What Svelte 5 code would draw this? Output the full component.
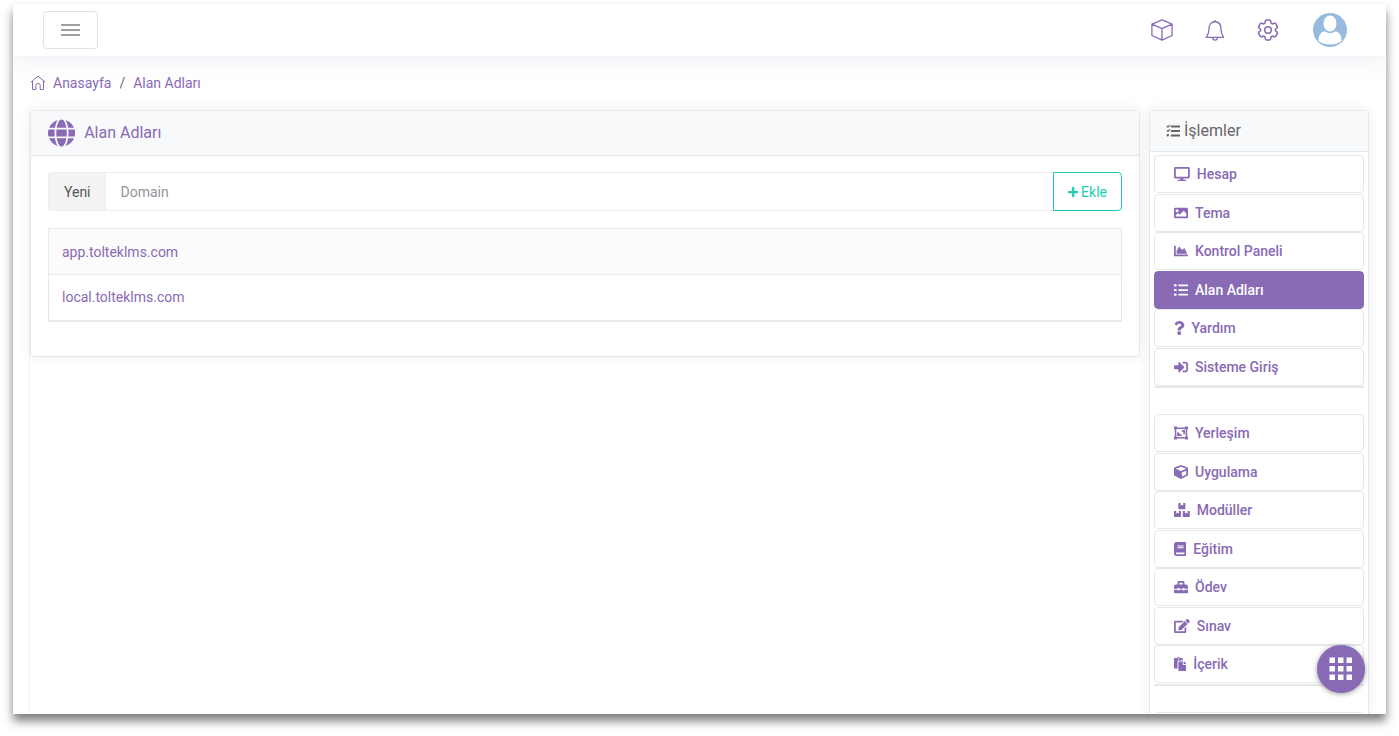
<script lang="ts">
  type Icon = { w: number; d: string };
  type Item = { label: string; icon: string; active?: boolean };

  const icons: Record<string, Icon> = {
    desktop: {
      w: 576,
      d: "M528 0H48C21.5 0 0 21.5 0 48v320c0 26.500 21.500 48 48 48h192l-16 48h-72c-13.300 0-24 10.700-24 24s10.700 24 24 24h272c13.300 0 24-10.700 24-24s-10.700-24-24-24h-72l-16-48h192c26.500 0 48-21.500 48-48V48c0-26.500-21.500-48-48-48zm-16 352H64V64h448v288z",
    },
    image: {
      w: 512,
      d: "M464 448H48c-26.500 0-48-21.500-48-48V112c0-26.500 21.500-48 48-48h416c26.500 0 48 21.500 48 48v288c0 26.500-21.500 48-48 48zM112 120a56 56 0 1 0 0 112a56 56 0 1 0 0-112zM64 384h384V272l-87.500-87.500c-4.700-4.700-12.300-4.700-17 0L208 320l-55.500-55.500c-4.700-4.700-12.300-4.700-17 0L64 336v48z",
    },
    chart: {
      w: 512,
      d: "M500 384c6.600 0 12 5.400 12 12v40c0 6.600-5.400 12-12 12H12c-6.600 0-12-5.400-12-12V76c0-6.600 5.400-12 12-12h40c6.600 0 12 5.400 12 12v308h436zM372.700 159.500L288 216l-85.300-113.700c-5.100-6.800-15.500-6.300-19.900 1L96 248v104h384l-89.900-187.800c-3.200-6.500-11.400-8.700-17.400-4.700z",
    },
    list: {
      w: 512,
      d: "M16 48h64c9 0 16 7 16 16v48c0 9-7 16-16 16H16c-9 0-16-7-16-16V64c0-9 7-16 16-16zM16 216h64c9 0 16 7 16 16v48c0 9-7 16-16 16H16c-9 0-16-7-16-16v-48c0-9 7-16 16-16zM16 384h64c9 0 16 7 16 16v48c0 9-7 16-16 16H16c-9 0-16-7-16-16v-48c0-9 7-16 16-16zM176 56h320c9 0 16 7 16 16v32c0 9-7 16-16 16H176c-9 0-16-7-16-16V72c0-9 7-16 16-16zM176 224h320c9 0 16 7 16 16v32c0 9-7 16-16 16H176c-9 0-16-7-16-16v-32c0-9 7-16 16-16zM176 392h320c9 0 16 7 16 16v32c0 9-7 16-16 16H176c-9 0-16-7-16-16v-32c0-9 7-16 16-16z",
    },
    question: {
      w: 384,
      d: "M202 0C122.200 0 70.500 32.700 29.900 91c-7.400 10.600-5.100 25.100 5.200 32.900l43.100 32.700c10.400 7.900 25.200 6 33.300-4.100 25-31.400 43.600-49.500 82.700-49.500 30.800 0 68.800 19.800 68.800 49.600 0 22.600-18.600 34.200-49 51.200-35.400 19.900-82.300 44.600-82.300 106.400V320c0 13.300 10.700 24 24 24h72.500c13.300 0 24-10.700 24-24v-5.800c0-42.900 125.300-44.600 125.300-160.600C377.500 66.300 286.900 0 202 0zM192 373.500a69.300 69.300 0 1 0 0 138.500a69.300 69.300 0 1 0 0-138.500z",
    },
    signin: {
      w: 512,
      d: "M416 448h-84c-6.600 0-12-5.400-12-12v-40c0-6.600 5.400-12 12-12h84c17.700 0 32-14.300 32-32V160c0-17.700-14.300-32-32-32h-84c-6.600 0-12-5.400-12-12V76c0-6.600 5.400-12 12-12h84c53 0 96 43 96 96v192c0 53-43 96-96 96zm-47-201L201 79c-15-15-41-4.500-41 17v96H24c-13.300 0-24 10.700-24 24v96c0 13.300 10.700 24 24 24h136v96c0 21.500 26 32 41 17l168-168c9.300-9.400 9.300-24.600 0-34z",
    },
    layout: {
      w: 512,
      d: "M0 20h112v32h288V20h112v100h-28v272h28v100H400v-32H112v32H0V392h28V120H0zM112 120H84v272h28v12h288v-12h28V120h-28v-12H112zM290 150h110v150H340V210H290zM112 240h90v60h80v62H112z",
    },
    cube: {
      w: 512,
      d: "M239.100 6.300l-208 78c-18.700 7-31.100 25-31.100 45v225.100c0 18.200 10.300 34.800 26.500 42.900l208 104c13.500 6.800 29.400 6.800 42.900 0l208-104c16.300-8.100 26.500-24.800 26.500-42.900V129.300c0-20-12.400-37.900-31.100-44.900l-208-78C262 2.200 250 2.200 239.100 6.300zM256 68.400l192 72v1.100l-192 78-192-78v-1.100l192-72zm32 356V275.500l160-65v133.900l-160 80z",
    },
    boxes: {
      w: 576,
      d: "M176 0h64v96l48-28 48 28V0h64q16 0 16 16v192q0 16-16 16H176q-16 0-16-16V16q0-16 16-16zM16 288h64v96l48-28 48 28v-96h64q16 0 16 16v192q0 16-16 16H16q-16 0-16-16V304q0-16 16-16zM336 288h64v96l48-28 48 28v-96h64q16 0 16 16v192q0 16-16 16H336q-16 0-16-16V304q0-16 16-16z",
    },
    book: {
      w: 448,
      d: "M448 360V24c0-13.300-10.700-24-24-24H96C43 0 0 43 0 96v320c0 53 43 96 96 96h328c13.300 0 24-10.700 24-24v-16c0-7.500-3.500-14.300-8.900-18.700-4.200-15.400-4.200-59.300 0-74.700 5.400-4.300 8.900-11.100 8.900-18.600zM128 128v32h224v-32zM128 192v32h224v-32zM381.400 448H96c-17.700 0-32-14.300-32-32 0-17.600 14.400-32 32-32h285.400c-1.900 17.100-1.900 46.900 0 64z",
    },
    toolbox: {
      w: 512,
      d: "M502 214l-45-45c-6-6-14-9-22-9h-51V80c0-26-22-48-48-48H176c-26 0-48 22-48 48v80H77c-8 0-16 3-22 9l-45 45c-6 6-10 14-10 23v83h128v-16q0-16 16-16h32q16 0 16 16v16h128v-16q0-16 16-16h32q16 0 16 16v16h128v-83c0-9-4-17-10-23zM320 160H192V96h128zM384 368q0 16-16 16h-32q-16 0-16-16v-16H192v16q0 16-16 16h-32q-16 0-16-16v-16H0v96q0 32 32 32h448q32 0 32-32v-96H384z",
    },
    edit: {
      w: 576,
      d: "M402.600 83.200l90.200 90.200c3.800 3.800 3.800 10 0 13.800L274.400 405.600l-92.800 10.300c-12.400 1.400-22.900-9.100-21.500-21.500l10.300-92.800L388.800 83.200c3.800-3.800 10-3.800 13.800 0zm162-22.900l-48.800-48.800c-15.200-15.200-39.900-15.200-55.200 0l-35.400 35.400c-3.800 3.800-3.800 10 0 13.800l90.200 90.200c3.800 3.800 10 3.800 13.800 0l35.400-35.400c15.200-15.300 15.200-40 0-55.200zM384 346.200V448H64V128h229.800c3.200 0 6.200-1.300 8.500-3.500l40-40c7.600-7.600 2.200-20.500-8.500-20.500H48C21.500 64 0 85.500 0 112v352c0 26.500 21.500 48 48 48h352c26.500 0 48-21.500 48-48V306.200c0-10.700-12.900-16-20.500-8.500l-40 40c-2.200 2.300-3.500 5.300-3.500 8.500z",
    },
    paste: {
      w: 448,
      d: "M128 184c0-30.900 25.100-56 56-56h136V56c0-13.300-10.700-24-24-24h-80.600C204.300 12.900 183.600 0 160 0s-44.300 12.900-55.400 32H24C10.700 32 0 42.700 0 56v336c0 13.300 10.700 24 24 24h104V184zM160 40a24 24 0 1 1 0 48a24 24 0 1 1 0-48zM344 288h104v200c0 13.300-10.700 24-24 24H184c-13.300 0-24-10.700-24-24V184c0-13.300 10.700-24 24-24h136v104c0 13.200 10.800 24 24 24zM448 250v6h-96v-96h6c6 0 12 3 17 7l66 66c4 5 7 11 7 17z",
    },
    tasks: {
      w: 512,
      d: "M10 84l30-28 30 26 54-58 32 28-84 92zM10 244l30-28 30 26 54-58 32 28-84 92zM66 370a44 44 0 1 0 0 88a44 44 0 1 0 0-88zM192 52h304q16 0 16 16v40q0 16-16 16H192q-16 0-16-16V68q0-16 16-16zM192 220h304q16 0 16 16v40q0 16-16 16H192q-16 0-16-16v-40q0-16 16-16zM192 388h304q16 0 16 16v40q0 16-16 16H192q-16 0-16-16v-40q0-16 16-16z",
    },
    plus: {
      w: 448,
      d: "M416 208H272V64c0-17.700-14.300-32-32-32h-32c-17.700 0-32 14.300-32 32v144H32c-17.700 0-32 14.300-32 32v32c0 17.700 14.300 32 32 32h144v144c0 17.700 14.300 32 32 32h32c17.700 0 32-14.300 32-32V304h144c17.700 0 32-14.300 32-32v-32c0-17.700-14.300-32-32-32z",
    },
    globe: {
      w: 496,
      d: "M336.500 160C322 70.700 287.800 8 248 8s-74 62.700-88.500 152h177zM152 256c0 22.200 1.200 43.500 3.300 64h185.300c2.100-20.500 3.300-41.800 3.300-64s-1.200-43.500-3.300-64H155.300c-2.100 20.500-3.300 41.800-3.300 64zm324.700-96c-28.600-67.900-86.500-120.400-158-141.600 24.400 33.800 41.200 84.700 50 141.600h108zM177.200 18.400C105.800 39.600 47.800 92.100 19.300 160h108c8.700-56.900 25.500-107.800 49.900-141.600zM487.400 192H372.700c2.100 21 3.300 42.500 3.300 64s-1.200 43-3.300 64h114.600c5.500-20.500 8.600-41.800 8.600-64s-3.100-43.500-8.500-64zM120 256c0-21.500 1.200-43 3.300-64H8.600C3.200 212.500 0 233.800 0 256s3.200 43.500 8.600 64h114.600c-2-21-3.200-42.500-3.200-64zm39.500 96c14.500 89.300 48.700 152 88.500 152s74-62.700 88.500-152h-177zm159.300 141.600c71.400-21.200 129.400-73.700 158-141.600h-108c-8.800 56.900-25.600 107.800-50 141.600zM19.300 352c28.600 67.900 86.500 120.400 158 141.600-24.400-33.800-41.200-84.700-50-141.600h-108z",
    },
  };

  const groups: Item[][] = [
    [
      { label: "Hesap", icon: "desktop" },
      { label: "Tema", icon: "image" },
      { label: "Kontrol Paneli", icon: "chart" },
      { label: "Alan Adları", icon: "list", active: true },
      { label: "Yardım", icon: "question" },
      { label: "Sisteme Giriş", icon: "signin" },
    ],
    [
      { label: "Yerleşim", icon: "layout" },
      { label: "Uygulama", icon: "cube" },
      { label: "Modüller", icon: "boxes" },
      { label: "Eğitim", icon: "book" },
      { label: "Ödev", icon: "toolbox" },
      { label: "Sınav", icon: "edit" },
      { label: "İçerik", icon: "paste" },
    ],
  ];

  let domains = $state(["app.tolteklms.com", "local.tolteklms.com"]);
  let domain = $state("");

  function add(e: SubmitEvent) {
    e.preventDefault();
    const name = domain.trim();
    if (!name) return;
    domains.push(name);
    domain = "";
  }
</script>

{#snippet glyph(name: string)}
  <svg class="glyph {name}" viewBox="0 0 {icons[name].w} 512" aria-hidden="true">
    <path fill-rule="evenodd" d={icons[name].d} />
  </svg>
{/snippet}

<div class="stage">
  <div class="window">
    <header class="topbar">
      <button class="toggle" type="button" aria-label="Menü">
        <svg width="20" height="14" viewBox="0 0 20 14" aria-hidden="true">
          <path d="M0 2h19M0 7h19M0 12h19" />
        </svg>
      </button>
      <nav class="tools">
        <button type="button" aria-label="Modüller">
          <svg class="line" viewBox="0 0 24 24" aria-hidden="true">
            <path d="M12 1L23 5.500V18L12 23L1 18V5.500zM1 5.500L12 10.500L23 5.500M12 10.500V23" />
          </svg>
        </button>
        <button type="button" aria-label="Bildirimler">
          <svg class="line" viewBox="0 0 24 24" aria-hidden="true">
            <path d="M12 3C7.500 3 5.500 6.500 5.500 10.500C5.500 15.500 4 17.500 2.500 20H21.500C20 17.500 18.500 15.500 18.500 10.500C18.500 6.500 16.500 3 12 3zM12 1v2M9.500 20.500a2.500 2.500 0 0 0 5 0" />
          </svg>
        </button>
        <button type="button" aria-label="Ayarlar">
          <svg class="line" viewBox="2 2 20 20" aria-hidden="true">
            <path
              d="M9.594 3.940c.09-.542.56-.94 1.110-.94h2.593c.55 0 1.020.398 1.110.94l.213 1.281c.063.374.313.686.645.87.074.04.147.083.22.127.324.196.72.257 1.075.124l1.217-.456a1.125 1.125 0 0 1 1.370.49l1.296 2.247a1.125 1.125 0 0 1-.26 1.431l-1.003.827c-.293.24-.438.613-.431.992a6.759 6.759 0 0 1 0 .255c-.007.378.138.75.43.99l1.005.828c.424.35.534.954.26 1.430l-1.298 2.247a1.125 1.125 0 0 1-1.369.491l-1.217-.456c-.355-.133-.75-.072-1.076.124a6.570 6.570 0 0 1-.22.128c-.331.183-.581.495-.644.869l-.213 1.280c-.09.543-.56.941-1.110.941h-2.594c-.55 0-1.020-.398-1.110-.94l-.213-1.281c-.062-.374-.312-.686-.644-.87a6.520 6.520 0 0 1-.22-.127c-.325-.196-.72-.257-1.076-.124l-1.217.456a1.125 1.125 0 0 1-1.369-.49l-1.297-2.247a1.125 1.125 0 0 1 .26-1.431l1.004-.827c.292-.24.437-.613.43-.992a6.932 6.932 0 0 1 0-.255c.007-.378-.138-.75-.43-.99l-1.004-.828a1.125 1.125 0 0 1-.26-1.430l1.297-2.247a1.125 1.125 0 0 1 1.370-.491l1.216.456c.356.133.751.072 1.076-.124.072-.044.146-.087.22-.128.332-.183.582-.495.644-.869zM15 12a3 3 0 1 1-6 0a3 3 0 0 1 6 0z"
            />
          </svg>
        </button>
        <button class="avatar" type="button" aria-label="Profil">
          <svg viewBox="0 0 34 34" aria-hidden="true">
            <circle cx="17" cy="17" r="17" fill="#96bbdf" />
            <ellipse cx="17" cy="10.500" rx="6.500" ry="8" fill="#fff" />
            <path d="M5.500 28C5.500 21 8.500 18.500 12 18.500Q17 22 22 18.500C25.500 18.500 28.500 21 28.500 28Q24 31.500 17 31.500T5.500 28z" fill="#fff" />
          </svg>
        </button>
      </nav>
    </header>

    <nav class="crumbs" aria-label="Konum">
      <a href="#home">
        <svg class="home" viewBox="0 0 16 16" aria-hidden="true">
          <path d="M.7 7.300L8 1.200L15.300 7.300M2.500 6v8.500h3.300v-4.300q0-1.700 2.200-1.700t2.200 1.700v4.300h3.300V6" />
        </svg>
        Anasayfa
      </a>
      <span>/</span>
      <a href="#domains">Alan Adları</a>
    </nav>

    <div class="content">
      <main>
        <section class="card">
          <h1>{@render glyph("globe")}Alan Adları</h1>
          <div class="card-body">
            <form class="add" onsubmit={add}>
              <label for="domain">Yeni</label>
              <input id="domain" type="text" placeholder="Domain" autocomplete="off" bind:value={domain} />
              <button type="submit">{@render glyph("plus")}Ekle</button>
            </form>
            <table>
              <tbody>
                {#each domains as name}
                  <tr><td><a href="#{name}">{name}</a></td></tr>
                {/each}
              </tbody>
            </table>
          </div>
        </section>
      </main>

      <aside>
        <h2>{@render glyph("tasks")}İşlemler</h2>
        {#each groups as items}
          <ul>
            {#each items as item}
              <li>
                <a href="#{item.icon}" class:active={item.active}>
                  {@render glyph(item.icon)}{item.label}
                </a>
              </li>
            {/each}
          </ul>
        {/each}
        <ul><li></li></ul>
      </aside>
    </div>

    <button class="fab" type="button" aria-label="Uygulamalar">
      <svg width="24" height="24" viewBox="0 0 24 24" aria-hidden="true">
        <path d="M.5.5h5.500v5.500H.5zM9 .5h5.500v5.500H9zM17.500.5H23v5.500h-5.500zM.5 9h5.500v5.500H.5zM9 9h5.500v5.500H9zM17.500 9H23v5.500h-5.500zM.5 17.500h5.500V23H.5zM9 17.500h5.500V23H9zM17.500 17.500H23V23h-5.500z" />
      </svg>
    </button>
  </div>
</div>

<style>
  :global(body) {
    background: #fff;
  }

  .stage {
    --purple: #886ab5;
    --line: #e5e8eb;
    box-sizing: border-box;
    height: 100vh;
    padding: 4px 13px 22px;
    font-family: Roboto, sans-serif;
    font-size: 14px;
    line-height: 20px;
    color: #666;
  }

  .stage :global(*) {
    box-sizing: border-box;
  }

  .window {
    position: relative;
    display: flex;
    flex-direction: column;
    height: 100%;
    overflow: hidden;
    background: #fff;
    box-shadow: 0 7px 9px rgba(0, 0, 0, 0.5);
  }

  a {
    color: var(--purple);
    text-decoration: none;
  }

  button,
  input {
    font: inherit;
  }

  button {
    padding: 0;
    cursor: pointer;
  }

  .glyph {
    flex: none;
    height: 14px;
    fill: currentColor;
  }

  .topbar {
    display: flex;
    flex: none;
    align-items: center;
    justify-content: space-between;
    height: 52px;
    padding: 0 39px 1px 30px;
    box-shadow: 0 0 28px rgba(86, 61, 124, 0.13);
  }

  .toggle {
    display: flex;
    align-items: center;
    justify-content: center;
    width: 55px;
    height: 38px;
    border: 1px solid #e2e2e2;
    border-radius: 4px;
    background: #fff;
  }

  .toggle path {
    stroke: #a0a0a0;
    stroke-width: 2;
  }

  .tools {
    display: flex;
    align-items: center;
    gap: 29px;
  }

  .tools button {
    display: flex;
    justify-content: center;
    width: 24px;
    padding-top: 1px;
    border: 0;
    background: none;
  }

  .line {
    width: 22px;
    height: 22px;
    fill: none;
    stroke: var(--purple);
    stroke-width: 1.4;
    stroke-linejoin: round;
  }

  .tools .avatar {
    width: 34px;
    margin-left: 4px;
    padding: 0;
  }

  .crumbs {
    display: flex;
    flex: none;
    gap: 8px;
    padding: 17px 17px 0;
  }

  .crumbs a {
    display: flex;
    align-items: center;
    gap: 7px;
  }

  .home {
    width: 16px;
    height: 16px;
    fill: none;
    stroke: var(--purple);
  }

  .content {
    display: flex;
    flex: 1;
    gap: 9px;
    min-height: 0;
    margin: 17px 17px 0 16px;
  }

  main {
    flex: 1;
    border-left: 1px solid #f3f3f3;
  }

  .card {
    border: 1px solid var(--line);
    border-radius: 4px;
    box-shadow: 0 0 13px rgba(62, 44, 90, 0.08);
  }

  h1,
  h2 {
    display: flex;
    align-items: center;
    margin: 0;
    font-weight: 400;
    background: #f8f9fb;
    border-bottom: 1px solid var(--line);
  }

  h1 {
    gap: 9px;
    height: 45px;
    padding: 0 17px;
    font-size: 16px;
    color: var(--purple);
  }

  .globe {
    height: 28px;
  }

  .card-body {
    padding: 16px 17px 34px;
  }

  .add {
    display: flex;
    height: 39px;
    margin-bottom: 17px;
  }

  .add label {
    display: flex;
    align-items: center;
    padding: 0 15px;
    background: #f3f3f3;
    border: solid #ededed;
    border-width: 1px 0 1px 1px;
    border-radius: 4px 0 0 4px;
    color: #555;
  }

  .add input {
    flex: 1;
    min-width: 0;
    padding: 0 15px;
    border: solid #ededed;
    border-width: 1px 0;
    outline: 0;
    color: #555;
  }

  .add input::placeholder {
    color: #909498;
    opacity: 1;
  }

  .add button {
    display: flex;
    align-items: center;
    gap: 3px;
    padding: 0 14px;
    border: 1px solid #1dc9b7;
    border-radius: 0 4px 4px 0;
    background: #fff;
    color: #1dc9b7;
  }

  .plus {
    height: 12px;
  }

  table {
    width: 100%;
    border-collapse: collapse;
    border: 1px solid #e9e9e9;
    border-bottom-width: 2px;
  }

  td {
    height: 46px;
    padding: 0 13px;
    border-top: 1px solid #e9e9e9;
  }

  tr:nth-child(odd) {
    background: #fbfbfb;
  }

  aside {
    flex: none;
    width: 220px;
    border: 1px solid var(--line);
    border-bottom: 0;
    border-radius: 4px 4px 0 0;
    box-shadow: 0 0 13px rgba(62, 44, 90, 0.08);
  }

  h2 {
    gap: 4px;
    height: 41px;
    padding: 0 16px;
    font-size: 16px;
  }

  ul {
    list-style: none;
    margin: 0 4px 26px;
    padding: 0;
    border-bottom: 2px solid var(--line);
  }

  h2 + ul {
    margin-top: 3px;
  }

  li {
    height: 38px;
    border: 1px solid var(--line);
    border-radius: 4px;
  }

  li:nth-child(odd) {
    margin-bottom: 1px;
  }

  li a {
    display: flex;
    align-items: center;
    gap: 7px;
    height: 100%;
    padding: 0 19px;
    font-weight: 500;
  }

  li:has(.active) {
    border-color: var(--purple);
  }

  li a.active {
    background: var(--purple);
    color: #fff;
  }

  .fab {
    position: absolute;
    right: 21px;
    bottom: 21px;
    display: flex;
    align-items: center;
    justify-content: center;
    width: 48px;
    height: 48px;
    border: 0;
    border-radius: 50%;
    background: var(--purple);
    box-shadow: 0 1px 5px rgba(0, 0, 0, 0.4);
  }

  .fab path {
    fill: #fff;
  }
</style>
